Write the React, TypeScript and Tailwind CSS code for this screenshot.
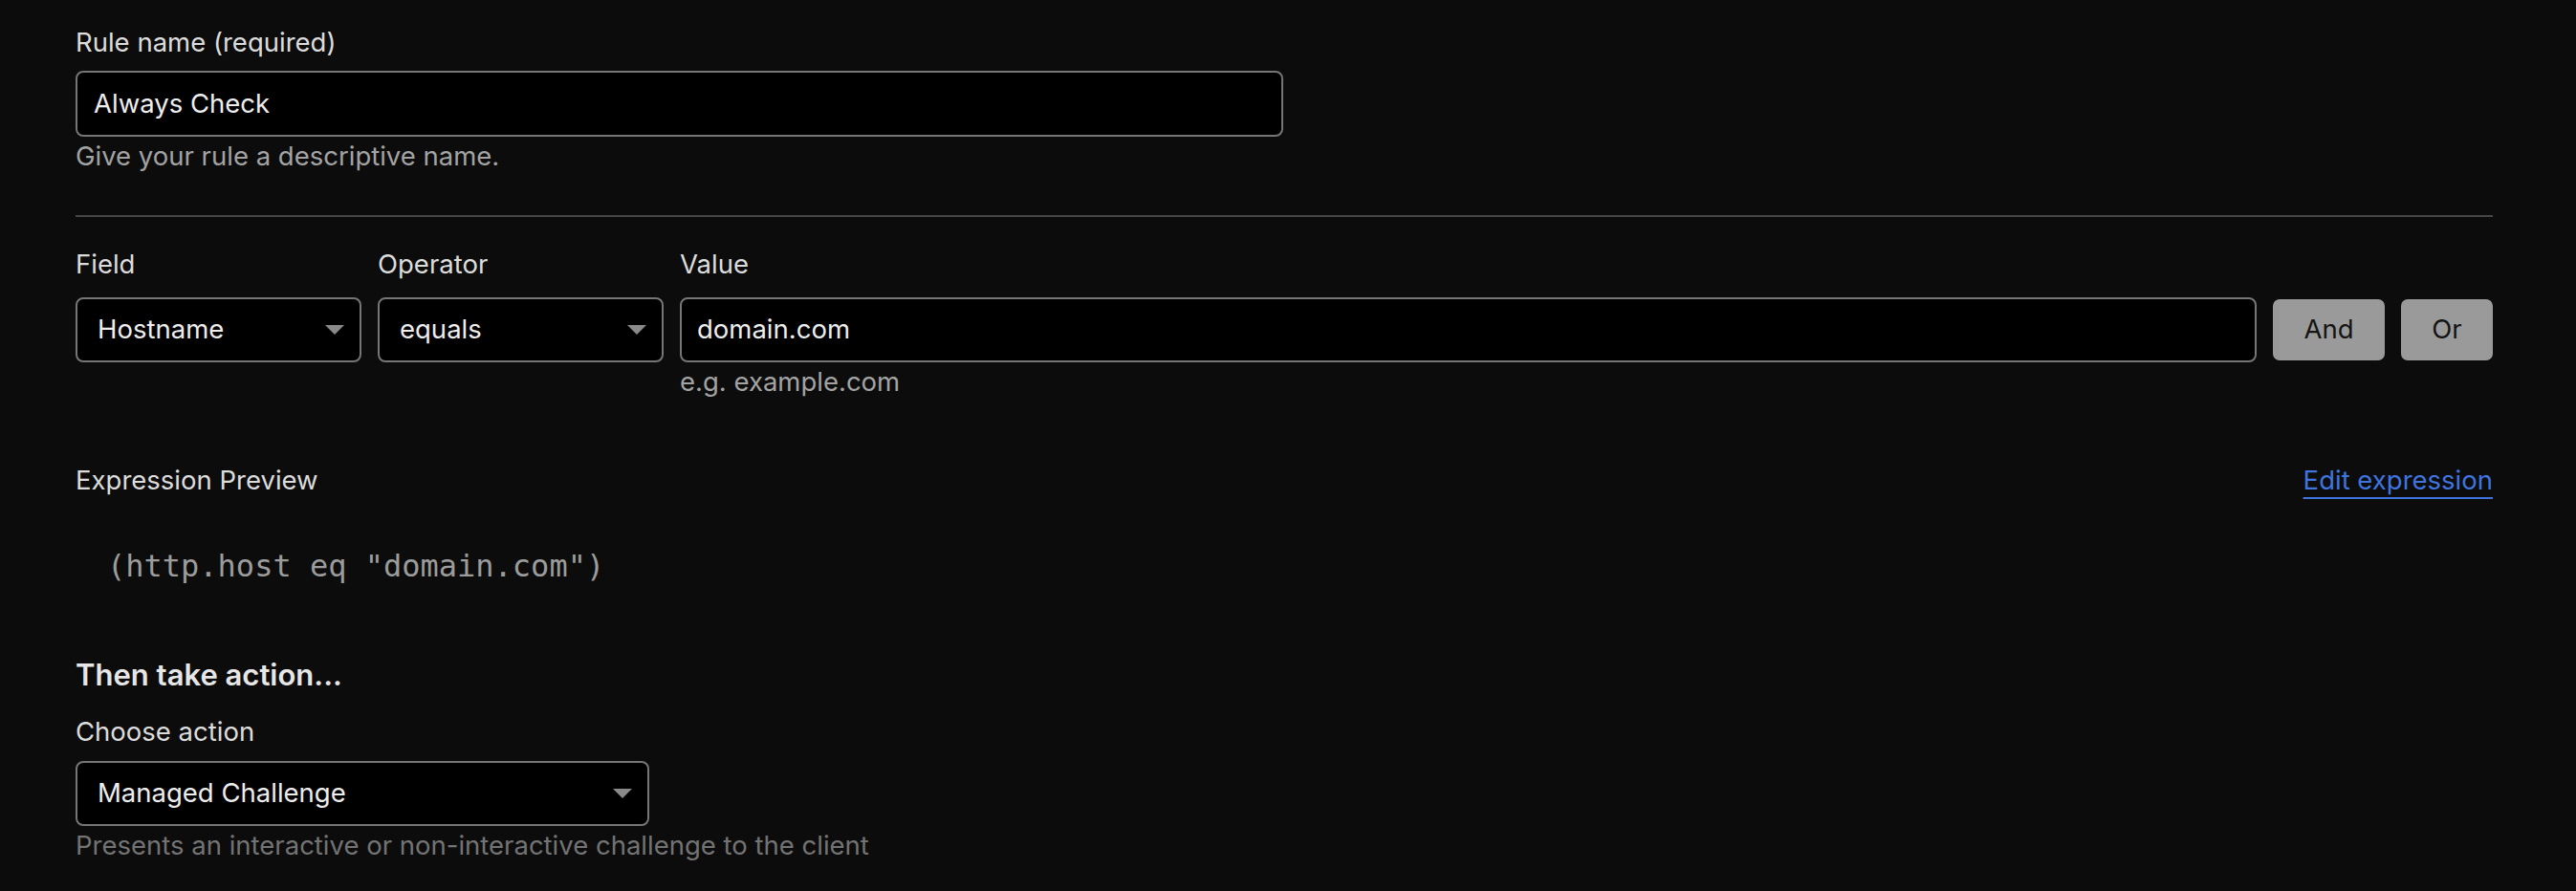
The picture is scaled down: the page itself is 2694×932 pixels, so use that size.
const LABEL = 'text-[27.5px] leading-[41px] text-[#dcdcdc]';
const HELP = 'text-[27.5px] leading-[41px] text-[#a3a3a3]';

function Caret() {
  return (
    <svg width="20" height="10" viewBox="0 0 20 10" className="shrink-0">
      <polygon points="0,0 20,0 10,10" fill="#8a8a8a" />
    </svg>
  );
}

function SelectBox({ value, className }: { value: string; className?: string }) {
  return (
    <div
      className={`flex h-[68px] items-center justify-between rounded-[8px] border-2 border-[#767676] bg-black pl-[21px] pr-[16px] text-[27.5px] text-[#ededed] ${className ?? ''}`}
    >
      <span>{value}</span>
      <Caret />
    </div>
  );
}

function Button({ label, className }: { label: string; className?: string }) {
  return (
    <button
      className={`flex h-[64px] items-center justify-center self-center rounded-[7px] bg-[#9a9a9a] text-[27.5px] text-[#141414] ${className ?? ''}`}
    >
      {label}
    </button>
  );
}

export default function App() {
  return (
    <div
      className="min-h-screen w-full bg-[#0c0c0c] pl-[79px] pr-[87px] pt-[24px]"
      style={{ fontFamily: 'Inter, "Noto Sans", sans-serif' }}
    >
      {/* Rule name */}
      <div className={LABEL}>Rule name (required)</div>
      <div className="mt-[9px] flex h-[69px] w-[1263px] items-center rounded-[8px] border-2 border-[#767676] bg-black px-[17px] text-[27.5px] text-[#ededed]">
        Always Check
      </div>
      <div className={HELP}>Give your rule a descriptive name.</div>

      <div className="mt-[41px] h-[2px] bg-[#464646]" />

      {/* Expression builder */}
      <div className="mt-[29px] grid grid-cols-[299px_299px_1fr_117px_96px] gap-x-[17px]">
        <div className={LABEL}>Field</div>
        <div className={LABEL}>Operator</div>
        <div className={LABEL}>Value</div>
        <div />
        <div />

        <SelectBox value="Hostname" className="mt-[14px]" />
        <SelectBox value="equals" className="mt-[14px]" />
        <div className="mt-[14px] flex h-[68px] items-center rounded-[8px] border-2 border-[#767676] bg-black px-[16px] text-[27.5px] text-[#ededed]">
          domain.com
        </div>
        <Button label="And" className="mt-[14px]" />
        <Button label="Or" className="mt-[14px]" />

        <div />
        <div />
        <div className={HELP}>e.g. example.com</div>
      </div>

      {/* Preview */}
      <div className="mt-[62px] flex items-center justify-between">
        <div className={LABEL}>Expression Preview</div>
        <a
          href="#"
          className="text-[27.5px] leading-[41px] text-[#3f74df] underline decoration-2 underline-offset-[8px]"
        >
          Edit expression
        </a>
      </div>
      <pre
        className="mt-[47px] pl-[33px] text-[32px] leading-[44px] text-[#9c9c9c]"
        style={{ fontFamily: '"DejaVu Sans Mono", "Liberation Mono", monospace' }}
      >
        (http.host eq "domain.com")
      </pre>

      {/* Action */}
      <h3 className="mt-[70px] text-[31px] font-semibold leading-[43px] text-[#e6e6e6]">Then take action...</h3>
      <div className={`mt-[18px] ${LABEL}`}>Choose action</div>
      <SelectBox value="Managed Challenge" className="mt-[10px] w-[600px]" />
      <div className="text-[27.5px] leading-[41px] text-[#737373]">
        Presents an interactive or non-interactive challenge to the client
      </div>
    </div>
  );
}
